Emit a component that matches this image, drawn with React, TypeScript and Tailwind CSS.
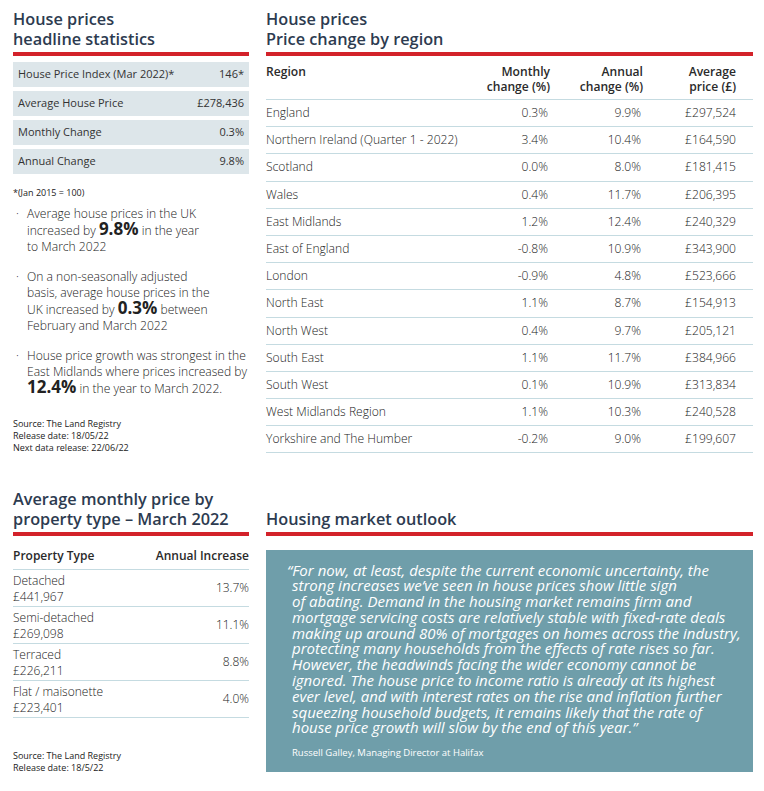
const stats = [
  { label: "House Price Index (Mar 2022)*", value: "146*" },
  { label: "Average House Price", value: "£278,436" },
  { label: "Monthly Change", value: "0.3%" },
  { label: "Annual Change", value: "9.8%" },
];

const regions = [
  ["England", "0.3%", "9.9%", "£297,524"],
  ["Northern Ireland (Quarter 1 - 2022)", "3.4%", "10.4%", "£164,590"],
  ["Scotland", "0.0%", "8.0%", "£181,415"],
  ["Wales", "0.4%", "11.7%", "£206,395"],
  ["East Midlands", "1.2%", "12.4%", "£240,329"],
  ["East of England", "-0.8%", "10.9%", "£343,900"],
  ["London", "-0.9%", "4.8%", "£523,666"],
  ["North East", "1.1%", "8.7%", "£154,913"],
  ["North West", "0.4%", "9.7%", "£205,121"],
  ["South East", "1.1%", "11.7%", "£384,966"],
  ["South West", "0.1%", "10.9%", "£313,834"],
  ["West Midlands Region", "1.1%", "10.3%", "£240,528"],
  ["Yorkshire and The Humber", "-0.2%", "9.0%", "£199,607"],
];

const types = [
  { name: "Detached", price: "£441,967", rise: "13.7%" },
  { name: "Semi-detached", price: "£269,098", rise: "11.1%" },
  { name: "Terraced", price: "£226,211", rise: "8.8%" },
  { name: "Flat / maisonette", price: "£223,401", rise: "4.0%" },
];

const quote = [
  "“For now, at least, despite the current economic uncertainty, the",
  "strong increases we’ve seen in house prices show little sign",
  "of abating. Demand in the housing market remains firm and",
  "mortgage servicing costs are relatively stable with fixed-rate deals",
  "making up around 80% of mortgages on homes across the industry,",
  "protecting many households from the effects of rate rises so far.",
  "However, the headwinds facing the wider economy cannot be",
  "ignored. The house price to income ratio is already at its highest",
  "ever level, and with interest rates on the rise and inflation further",
  "squeezing household budgets, it remains likely that the rate of",
  "house price growth will slow by the end of this year.”",
];

const Heading = ({ lines }: { lines: string[] }) => (
  <div>
    <h2 className="text-[16.3px] leading-[20px] font-semibold text-[#2d3b50]">
      {lines.map((l) => (
        <div key={l}>{l}</div>
      ))}
    </h2>
    <div className="h-[4px] bg-[#d3222a] mt-[3px]" />
  </div>
);

export default function App() {
  return (
    <div className="w-[764px] h-[791px] bg-white font-['Open_Sans',sans-serif] text-[#333] px-[13px] pr-[11px] pt-[9px]">
      {/* TOP */}
      <div className="grid grid-cols-[236px_487px] gap-x-[17px]">
        {/* headline stats */}
        <div>
          <Heading lines={["House prices", "headline statistics"]} />
          <div className="mt-[6px] flex flex-col gap-[4px]">
            {stats.map((s) => (
              <div
                key={s.label}
                className="h-[25px] bg-[#dde6ea] flex items-center justify-between px-[5px] text-[11px] text-[#333]"
              >
                <span>{s.label}</span>
                <span>{s.value}</span>
              </div>
            ))}
          </div>
          <p className="mt-[12px] text-[9px] text-[#222]">*(Jan 2015 = 100)</p>
          <ul className="mt-[6px] flex flex-col gap-[14px] text-[12.1px] leading-[16px] font-light text-[#222]">
            <li className="flex">
              <span className="w-[14px] shrink-0 pl-[3px]">·</span>
              <span>
                Average house prices in the UK
                <br />
                increased by <b className="font-bold text-[17px] leading-[14px]">9.8%</b> in the year
                <br />
                to March 2022
              </span>
            </li>
            <li className="flex">
              <span className="w-[14px] shrink-0 pl-[3px]">·</span>
              <span>
                On a non-seasonally adjusted
                <br />
                basis, average house prices in the
                <br />
                UK increased by <b className="font-bold text-[17px] leading-[14px]">0.3%</b> between
                <br />
                February and March 2022
              </span>
            </li>
            <li className="flex">
              <span className="w-[14px] shrink-0 pl-[3px]">·</span>
              <span className="whitespace-nowrap">
                House price growth was strongest in the
                <br />
                East Midlands where prices increased by
                <br />
                <b className="font-bold text-[17px] leading-[14px]">12.4%</b> in the year to March 2022.
              </span>
            </li>
          </ul>
          <div className="mt-[21px] text-[9px] leading-[12px] text-[#222]">
            <div>Source: The Land Registry</div>
            <div>Release date: 18/05/22</div>
            <div>Next data release: 22/06/22</div>
          </div>
        </div>

        {/* regions table */}
        <div>
          <Heading lines={["House prices", "Price change by region"]} />
          <table className="mt-[8px] w-full table-fixed border-collapse text-[12.1px]">
            <thead>
              <tr className="border-b border-[#c5dbe1] text-[#2a2a2a] leading-[15px] align-top">
                <th className="text-left font-semibold pb-[5px]">Region</th>
                <th className="text-right font-semibold w-[85px] pb-[5px]">
                  Monthly
                  <br />
                  change (%)
                </th>
                <th className="text-right font-semibold w-[93px] pb-[5px]">
                  Annual
                  <br />
                  change (%)
                </th>
                <th className="text-right font-semibold w-[110px] pr-[17px] pb-[5px]">
                  Average
                  <br />
                  price (£)
                </th>
              </tr>
            </thead>
            <tbody className="font-light text-[#222] whitespace-nowrap">
              {regions.map((r) => (
                <tr key={r[0]} className="border-b border-[#c5dbe1] h-[27.2px]">
                  <td className="text-left">{r[0]}</td>
                  <td className="text-right pr-[2px]">{r[1]}</td>
                  <td className="text-right pr-[2px]">{r[2]}</td>
                  <td className="text-right pr-[17px]">{r[3]}</td>
                </tr>
              ))}
            </tbody>
          </table>
        </div>
      </div>

      {/* BOTTOM */}
      <div className="mt-[35px] grid grid-cols-[236px_487px] gap-x-[17px] items-end">
        <Heading lines={["Average monthly price by", "property type – March 2022"]} />
        <Heading lines={["Housing market outlook"]} />
      </div>
      <div className="grid grid-cols-[236px_487px] gap-x-[17px]">
        <div>
          <table className="mt-[12px] w-full border-collapse text-[12px]">
            <thead>
              <tr className="border-b border-[#c5dbe1] leading-[15px]">
                <th className="text-left font-semibold text-[#2a2a2a] pb-[6px]">Property Type</th>
                <th className="text-right font-semibold text-[#2a2a2a] pb-[6px]">Annual Increase</th>
              </tr>
            </thead>
            <tbody className="font-light text-[#222]">
              {types.map((t) => (
                <tr key={t.name} className="border-b border-[#c5dbe1]">
                  <td className="leading-[16px] pt-[3px] pb-[1px]">
                    <div>{t.name}</div>
                    <div>{t.price}</div>
                  </td>
                  <td className="text-right">{t.rise}</td>
                </tr>
              ))}
            </tbody>
          </table>
          <div className="mt-[32px] text-[9px] leading-[12px] text-[#222]">
            <div>Source: The Land Registry</div>
            <div>Release date: 18/5/22</div>
          </div>
        </div>

        <div className="mt-[14px] bg-[#6f9eaa] h-[222px] pl-[21px] pt-[13px] text-white">
          <p className="italic text-[15px] leading-[15.8px] whitespace-nowrap">
            {quote.map((l, i) => (
              <span key={i} className={i === 0 ? "block" : "block pl-[5px]"}>
                {l}
              </span>
            ))}
          </p>
          <p className="mt-[10px] pl-[5px] text-[9.5px]">Russell Galley, Managing Director at Halifax</p>
        </div>
      </div>
    </div>
  );
}
